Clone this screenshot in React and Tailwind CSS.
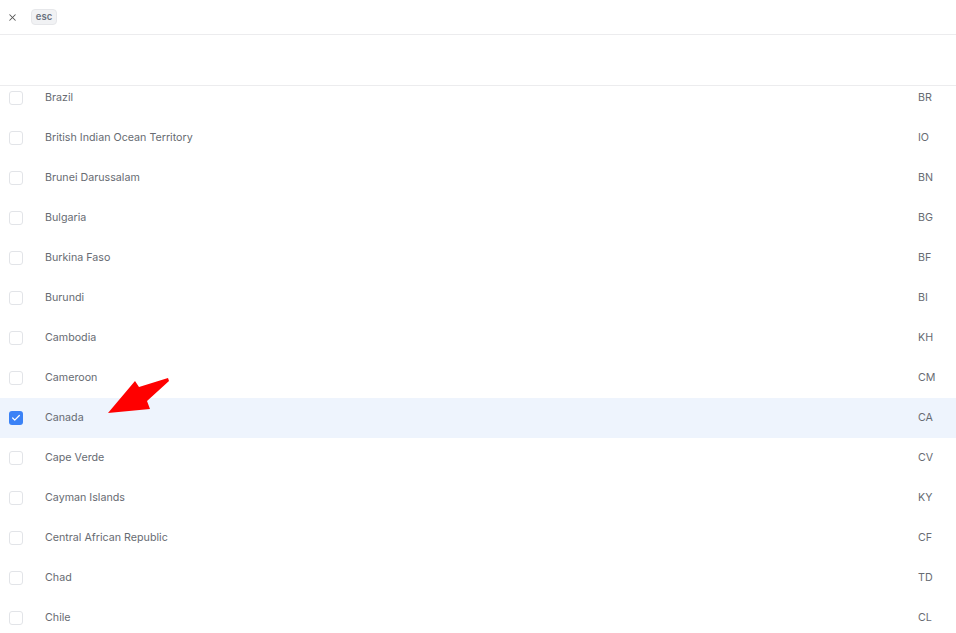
import React from 'react';
import { X, Check } from 'lucide-react';

const countries = [
  { name: 'Brazil', code: 'BR' },
  { name: 'British Indian Ocean Territory', code: 'IO' },
  { name: 'Brunei Darussalam', code: 'BN' },
  { name: 'Bulgaria', code: 'BG' },
  { name: 'Burkina Faso', code: 'BF' },
  { name: 'Burundi', code: 'BI' },
  { name: 'Cambodia', code: 'KH' },
  { name: 'Cameroon', code: 'CM' },
  { name: 'Canada', code: 'CA', checked: true },
  { name: 'Cape Verde', code: 'CV' },
  { name: 'Cayman Islands', code: 'KY' },
  { name: 'Central African Republic', code: 'CF' },
  { name: 'Chad', code: 'TD' },
  { name: 'Chile', code: 'CL' },
];

function Row({ country }) {
  return (
    <div className={
      'flex items-center h-[40px] ' + (country.checked ? 'bg-[#eef4fd]' : 'bg-white')
    }>
      <div className="w-[45px] pl-[9px] flex items-center">
        {country.checked ? (
          <div className="w-[14px] h-[14px] rounded-[3px] bg-[#3b82f6] flex items-center justify-center">
            <Check className="w-[10px] h-[10px] text-white" strokeWidth={3} />
          </div>
        ) : (
          <div className="w-[14px] h-[14px] rounded-[3px] border border-[#e2e4e8] bg-white" />
        )}
      </div>
      <span className="flex-1 text-[10.7px] text-[#676b72]">{country.name}</span>
      <span className="w-[38px] text-[10.7px] text-[#676b72]">{country.code}</span>
    </div>
  );
}

export default function App() {
  return (
    <div className="relative w-[956px] h-[633px] bg-white overflow-hidden font-['Inter',sans-serif]">
      {/* Top bar */}
      <div className="h-[35px] flex items-center gap-[13px] pl-[7px] border-b border-[#ececee]">
        <X className="w-[11px] h-[11px] text-[#555]" strokeWidth={2.2} />
        <span className="w-[26px] h-[16px] flex items-center justify-center rounded-[4px] bg-[#f1f2f4] border border-[#e6e7ea] text-[9.5px] font-semibold text-[#6b7280]">
          esc
        </span>
      </div>

      {/* Search area */}
      <div className="h-[51px] border-b border-[#ececee]" />

      {/* List */}
      <div className="overflow-hidden h-[547px]">
        <div className="-mt-[8px]">
          {countries.map(c => <Row key={c.code} country={c} />)}
        </div>
      </div>

      {/* Annotation arrow */}
      <svg className="absolute left-0 top-0 pointer-events-none" width="956" height="633">
        <polygon
          points="108,413 135,381 139,387 168,378 169,381 147,401 150,409"
          fill="#ff0000"
        />
      </svg>
    </div>
  );
}
